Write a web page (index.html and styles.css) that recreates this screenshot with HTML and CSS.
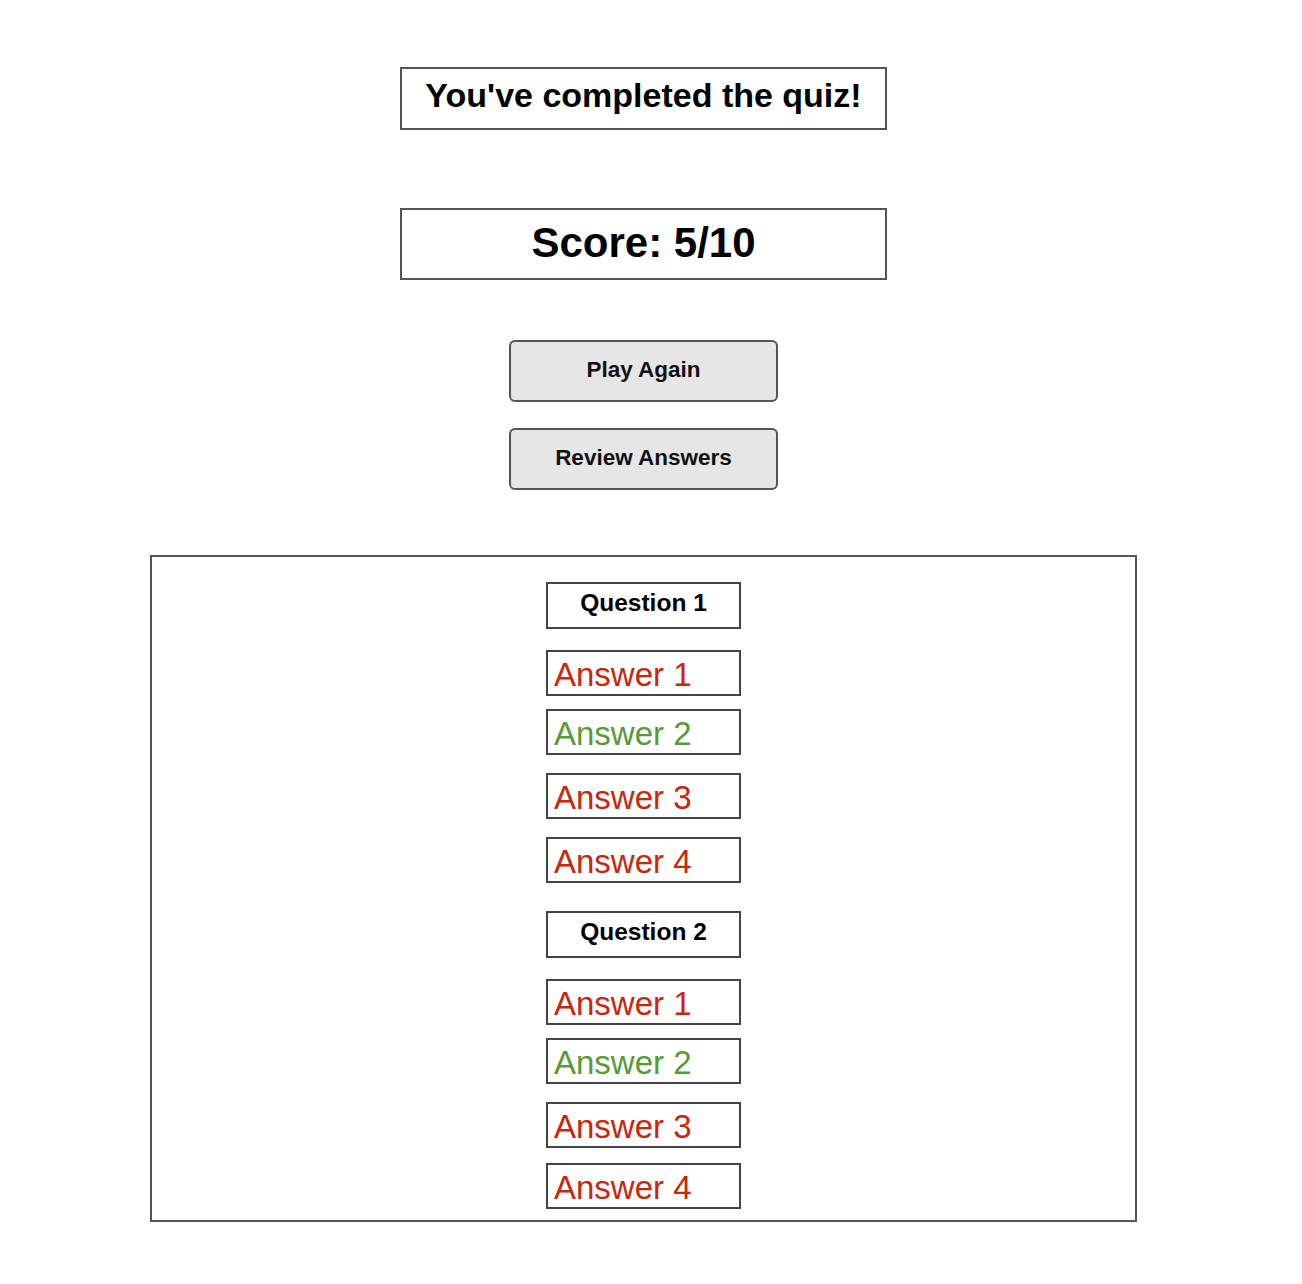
FILE: index.html
```html
<!DOCTYPE html>
<html lang="en">
<head>
<meta charset="utf-8">
<title>Quiz Complete</title>
<link rel="stylesheet" href="styles.css">
</head>
<body>
<main class="page">
  <h1 class="title-box">You've completed the quiz!</h1>
  <div class="score-box">Score: 5/10</div>
  <div class="actions">
    <button class="btn">Play Again</button>
    <button class="btn">Review Answers</button>
  </div>
  <section class="review">
    <div class="question">Question 1</div>
    <div class="answer wrong first">Answer 1</div>
    <div class="answer right tight">Answer 2</div>
    <div class="answer wrong">Answer 3</div>
    <div class="answer wrong">Answer 4</div>
    <div class="question next">Question 2</div>
    <div class="answer wrong first">Answer 1</div>
    <div class="answer right tight">Answer 2</div>
    <div class="answer wrong">Answer 3</div>
    <div class="answer wrong last">Answer 4</div>
  </section>
</main>
</body>
</html>
```

FILE: styles.css
```css
* { box-sizing: border-box; }
html, body { margin: 0; padding: 0; background: #fff; }
body { font-family: "Liberation Sans", Arial, sans-serif; color: #000; }

.page {
  display: flex;
  flex-direction: column;
  align-items: center;
  padding-top: 67px;
  padding-right: 15px;
}

.title-box {
  margin: 0;
  width: 487px;
  height: 63px;
  border: 2px solid #555;
  display: flex;
  align-items: center;
  justify-content: center;
  font-size: 34px;
  font-weight: bold;
  padding-bottom: 6px;
}

.score-box {
  margin-top: 78px;
  width: 487px;
  height: 72px;
  border: 2px solid #555;
  display: flex;
  align-items: center;
  justify-content: center;
  font-size: 42px;
  font-weight: bold;
  padding-bottom: 3px;
}

.actions {
  margin-top: 60px;
  display: flex;
  flex-direction: column;
  gap: 26px;
}

.btn {
  width: 269px;
  height: 62px;
  background: #e6e6e6;
  border: 2px solid #555;
  border-radius: 6px;
  font-family: "Liberation Sans", Arial, sans-serif;
  font-size: 22.5px;
  font-weight: bold;
  color: #111;
  padding: 0 0 3px;
}

.review {
  margin-top: 65px;
  width: 987px;
  border: 2px solid #555;
  display: flex;
  flex-direction: column;
  align-items: center;
  padding: 25px 0 11px;
}

.question {
  width: 195px;
  height: 47px;
  border: 2px solid #444;
  display: flex;
  align-items: center;
  justify-content: center;
  font-size: 24.5px;
  font-weight: bold;
  padding-bottom: 5px;
}

.question.next { margin-top: 28px; }

.answer {
  width: 195px;
  height: 46px;
  border: 2px solid #444;
  display: flex;
  align-items: center;
  padding-left: 6px;
  padding-top: 3px;
  font-size: 33px;
  margin-top: 18px;
}

.answer.first { margin-top: 21px; }
.answer.tight { margin-top: 13px; }
.answer.last { margin-top: 15px; }

.wrong { color: #c8260f; }
.right { color: #569a3a; }
```
